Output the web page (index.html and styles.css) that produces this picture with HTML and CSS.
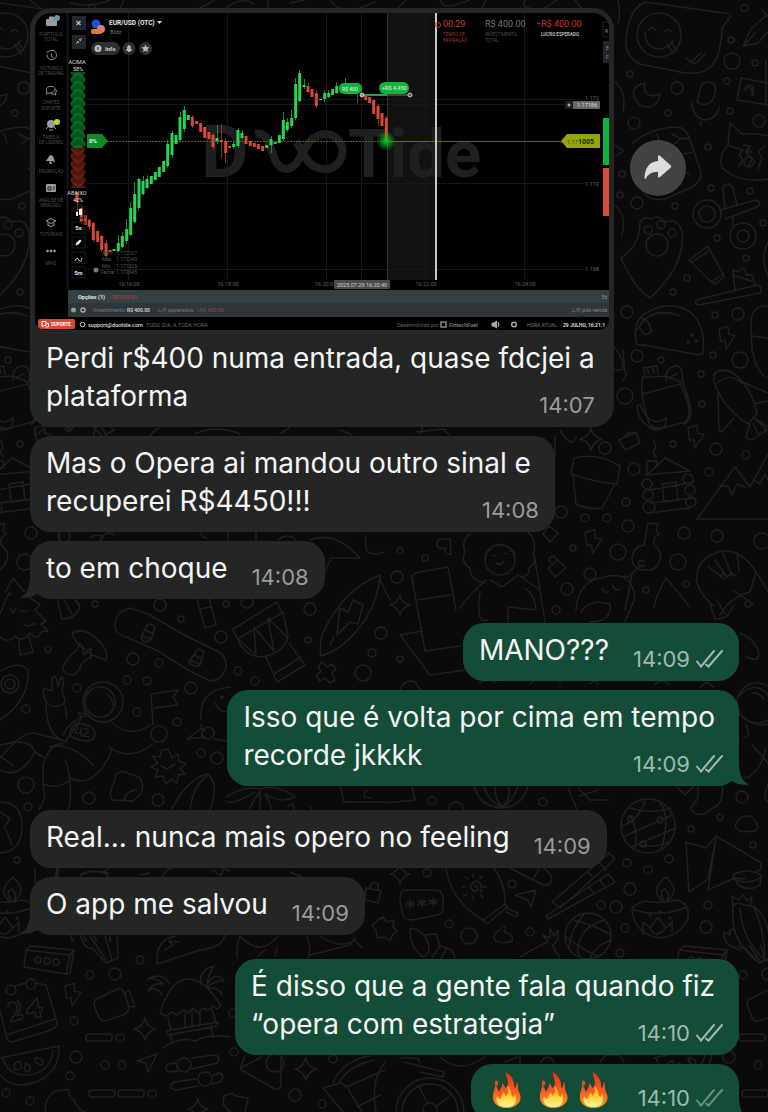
FILE: index.html
```html
<!DOCTYPE html>
<html lang="pt-BR">
<head>
<meta charset="utf-8">
<meta name="viewport" content="width=device-width, initial-scale=1">
<title>Conversa</title>
<link rel="stylesheet" href="styles.css">
</head>
<body>
<div class="screen">
<svg class="wallpaper" aria-hidden="true">
<defs>
<symbol id="bolt" viewBox="0 0 20 26" overflow="visible"><path d="M1 3L11 0L12 9L19 10L9 25L8 16L3 17Z"/></symbol>
<symbol id="spark" viewBox="0 0 20 20" overflow="visible"><path d="M10 0Q11 8 20 10Q12 12 10 20Q8 12 0 10Q8 8 10 0Z"/></symbol>
<clipPath id="left-edge"><path d="M0 0H115V592H0ZM0 868H115V942H0Z"/></clipPath>
<clipPath id="right-edge"><path d="M653 945H900V1400H653Z"/></clipPath>
</defs>
<g id="doodles">
<!-- small dots -->
<path d="M741 8a3.500 3.500 0 1 1 7 0a3.500 3.500 0 1 1-7 0M728 40a3 3 0 1 1 6 0a3 3 0 1 1-6 0M752 63a3 3 0 1 1 6 0a3 3 0 1 1-6 0M627 74a3 3 0 1 1 6 0a3 3 0 1 1-6 0M665 113a3 3 0 1 1 6 0a3 3 0 1 1-6 0M724 81a3 3 0 1 1 6 0a3 3 0 1 1-6 0M727 111a3 3 0 1 1 6 0a3 3 0 1 1-6 0M705 147a3 3 0 1 1 6 0a3 3 0 1 1-6 0M619 174a3 3 0 1 1 6 0a3 3 0 1 1-6 0M617 195a3 3 0 1 1 6 0a3 3 0 1 1-6 0M672 206a3 3 0 1 1 6 0a3 3 0 1 1-6 0M708 188a3 3 0 1 1 6 0a3 3 0 1 1-6 0M747 191a3 3 0 1 1 6 0a3 3 0 1 1-6 0M760 223a3 3 0 1 1 6 0a3 3 0 1 1-6 0M714 238a3 3 0 1 1 6 0a3 3 0 1 1-6 0M743 258a3 3 0 1 1 6 0a3 3 0 1 1-6 0M684 278a3 3 0 1 1 6 0a3 3 0 1 1-6 0M670 292a3 3 0 1 1 6 0a3 3 0 1 1-6 0M712 315a3 3 0 1 1 6 0a3 3 0 1 1-6 0"/>
<g>
<circle cx="732" cy="61" r="8"/><circle cx="677" cy="88" r="6"/><circle cx="634" cy="123" r="6"/><circle cx="759" cy="121" r="6"/><circle cx="637" cy="203" r="6"/><circle cx="627" cy="312" r="6"/><circle cx="738" cy="314" r="6"/>
<circle cx="637" cy="356" r="6"/><circle cx="661" cy="360" r="3"/><circle cx="713" cy="355" r="3"/><circle cx="740" cy="360" r="8"/><circle cx="701" cy="374" r="3"/><circle cx="625" cy="396" r="8"/><circle cx="702" cy="404" r="3"/><circle cx="605" cy="448" r="6"/><circle cx="673" cy="444" r="3"/><circle cx="716" cy="449" r="6"/><circle cx="746" cy="455" r="4"/><circle cx="634" cy="469" r="6"/><circle cx="709" cy="472" r="4"/><circle cx="626" cy="502" r="4"/><circle cx="561" cy="512" r="6"/><circle cx="585" cy="518" r="4"/><circle cx="607" cy="518" r="4"/><circle cx="628" cy="526" r="6"/><circle cx="684" cy="533" r="6"/><circle cx="717" cy="536" r="6"/><circle cx="618" cy="552" r="8"/><circle cx="573" cy="548" r="3"/><circle cx="678" cy="562" r="8"/><circle cx="590" cy="574" r="6"/><circle cx="567" cy="589" r="6"/><circle cx="646" cy="590" r="3"/><circle cx="686" cy="584" r="3"/><circle cx="400" cy="551" r="3"/><circle cx="425" cy="558" r="3"/><circle cx="397" cy="577" r="6"/><circle cx="762" cy="541" r="8"/>
<circle cx="95" cy="604" r="3"/><circle cx="160" cy="605" r="6"/><circle cx="181" cy="619" r="3"/><circle cx="226" cy="604" r="3"/><circle cx="247" cy="602" r="6"/><circle cx="310" cy="609" r="6"/><circle cx="221" cy="637" r="6"/><circle cx="308" cy="640" r="3"/><circle cx="48" cy="649" r="3"/><circle cx="133" cy="659" r="6"/><circle cx="159" cy="663" r="4"/><circle cx="238" cy="671" r="4"/><circle cx="255" cy="681" r="4"/><circle cx="127" cy="680" r="4"/><circle cx="147" cy="681" r="4"/><circle cx="191" cy="688" r="6"/><circle cx="77" cy="688" r="4"/><circle cx="363" cy="673" r="8"/><circle cx="372" cy="653" r="4"/><circle cx="381" cy="633" r="6"/><circle cx="137" cy="712" r="4"/><circle cx="177" cy="722" r="4"/><circle cx="26" cy="709" r="4"/><circle cx="201" cy="753" r="4"/><circle cx="217" cy="758" r="6"/><circle cx="26" cy="785" r="8"/><circle cx="28" cy="807" r="4"/><circle cx="89" cy="798" r="6"/><circle cx="158" cy="800" r="6"/><circle cx="400" cy="659" r="3"/><circle cx="556" cy="610" r="4"/><circle cx="748" cy="604" r="3"/>
<circle cx="432" cy="801" r="4"/><circle cx="456" cy="809" r="7"/><circle cx="543" cy="802" r="4"/><circle cx="742" cy="797" r="6"/><circle cx="720" cy="817" r="3"/><circle cx="691" cy="829" r="3"/><circle cx="753" cy="845" r="3"/><circle cx="627" cy="863" r="4"/><circle cx="648" cy="870" r="4"/><circle cx="669" cy="859" r="4"/><circle cx="630" cy="889" r="6"/><circle cx="601" cy="905" r="4"/><circle cx="616" cy="907" r="6"/><circle cx="625" cy="928" r="4"/><circle cx="708" cy="905" r="4"/><circle cx="706" cy="927" r="6"/><circle cx="512" cy="884" r="4"/><circle cx="427" cy="873" r="4"/><circle cx="449" cy="924" r="4"/><circle cx="469" cy="936" r="8"/><circle cx="530" cy="932" r="4"/><circle cx="620" cy="953" r="4"/><circle cx="17" cy="860" r="3"/>
<circle cx="140" cy="960" r="4"/><circle cx="115" cy="974" r="6"/><circle cx="90" cy="975" r="4"/><circle cx="74" cy="1021" r="4"/><circle cx="120" cy="1038" r="4"/><circle cx="76" cy="1057" r="6"/><circle cx="105" cy="1065" r="4"/><circle cx="122" cy="1065" r="4"/><circle cx="70" cy="1076" r="4"/><circle cx="6" cy="1093" r="4"/><circle cx="30" cy="1101" r="4"/><circle cx="152" cy="1094" r="4"/><circle cx="233" cy="1013" r="4"/><circle cx="234" cy="1052" r="4"/><circle cx="333" cy="1059" r="4"/><circle cx="295" cy="1095" r="6"/><circle cx="322" cy="1104" r="4"/>
</g>
<!-- laughing speech balloon, pen, moon, microphone -->
<path d="M645 2Q628 10 626 40Q625 57 640 64L680 72Q708 78 717 57Q722 43 722 28L731 16Q731 13 724 13Z"/>
<circle cx="659" cy="35" r="22"/><path d="M645 32Q645 48 659 49Q670 48 674 40M649 30q3-5 7 0M664 32q4-5 7 0M667 44l7 10M671 42l6 9M686 58l5 4l10-9M691 62l4 2l10-10"/>
<path d="M768 14L751 29L743 46L758 43L768 32M744 46L755 33M762 10L768 17"/>
<path d="M645 83Q631 86 634 97Q638 108 650 107Q659 104 660 94Q651 98 646 93Q643 88 645 83Z"/>
<path d="M701 86Q705 79 714 84Q717 87 714 97L711 102Q704 107 697 102ZM691 103Q694 119 706 120Q717 118 719 108M701 121V126"/>
<path d="M741 78L768 83M741 78L737 100L768 105M766 60V104"/><path d="M746 91a4 4 0 1 1 7 0v4M744 89q6-4 8 2v4"/>
<!-- ice block, cat, scissors, paw -->
<path d="M633 143Q650 128 676 127Q686 127 690 140L701 172Q702 182 690 188L665 199Q648 202 642 190M657 134L660 143M672 134L681 139L674 144M678 138L690 139M684 154L692 152M681 168L690 175"/>
<path d="M730 123L728 145Q718 155 722 168Q740 184 768 179M730 123L742 134Q756 133 768 136M730 146L743 150L739 155L743 160L739 166M744 145L750 146L746 152L752 159L748 168M765 146L758 151L762 158L758 169M748 153q0-5 4 0"/><circle cx="749" cy="162" r="5"/>
<circle cx="707" cy="214" r="14"/><circle cx="707" cy="214" r="8"/><circle cx="743" cy="236" r="13"/><circle cx="743" cy="236" r="6"/><path d="M720 210L756 200Q763 203 757 207L725 219M725 209L723 188Q727 180 733 188L737 205M733 217L733 226"/>
<path d="M640 222Q644 216 651 219Q658 214 665 222Q679 218 682 232Q686 265 650 298Q634 288 621 258Q640 246 640 222Z"/><circle cx="657" cy="245" r="11"/><circle cx="648" cy="230" r="4"/><circle cx="661" cy="225" r="4"/><circle cx="672" cy="233" r="4"/>
<path d="M689 260L708 246L723 274L711 282ZM692 262L710 250M711 282L716 284L724 277L723 273"/>
<path d="M696 300L757 285Q764 288 760 293L699 305Q694 304 696 300ZM735 290L733 270Q738 274 742 268Q747 269 746 275Q755 274 753 280L756 286M733 275L751 281"/>
<path d="M768 242Q760 258 768 276M768 306Q750 305 751 325L752 350Q758 376 768 378M751 336L768 338"/>
<!-- taco, bottle and fruit -->
<path d="M636 342Q632 318 650 311Q671 300 690 312Q706 325 703 352Q702 356 694 354L644 345Q636 346 636 342ZM637 330Q650 305 680 316M640 328Q645 340 652 330M641 318Q651 320 651 333"/><circle cx="692" cy="335" r="1"/><circle cx="688" cy="342" r="1"/><circle cx="696" cy="341" r="1"/>
<path d="M643 377Q639 392 648 420Q650 430 663 428L685 422Q691 418 688 403L680 382Q667 374 653 377ZM643 394L680 384M683 381L690 405Q693 420 684 424M645 375L643 368L657 366L658 374M647 368l2 6M652 367l2 6M666 380Q665 366 678 366Q684 369 682 382M670 379q3-5 7-5"/>
<path d="M637 406Q638 423 655 430Q667 430 666 418Q657 426 647 417L640 405Z"/>
<path d="M714 374Q725 365 738 377Q753 391 757 414L748 424Q723 408 714 382ZM717 383Q730 372 742 383M738 380L768 393M754 404L768 401M718 394L719 430Q722 434 725 428L734 418M750 424L746 437Q750 443 759 435L767 430L755 419M753 424L759 435M757 420L768 427"/>
<path d="M623 350l2 22q4 2-2 8"/>
<use href="#bolt" x="718" y="326" width="18" height="24"/><use href="#bolt" x="687" y="424" width="18" height="26"/><use href="#bolt" x="584" y="529" width="19" height="26"/>
<use href="#spark" x="580" y="428" width="22" height="22"/><use href="#spark" x="390" y="595" width="20" height="20"/><use href="#spark" x="134" y="1018" width="22" height="22"/><use href="#spark" x="295" y="1058" width="22" height="22"/><use href="#spark" x="390" y="864" width="20" height="20"/><use href="#spark" x="188" y="1098" width="20" height="22"/>
<path d="M619 440L636 432L640 443L625 450ZM625 436l4-4l5 2M654 440l2 8l-3 4l3 5"/>
<!-- flower pot, cabin, mountains, key -->
<path d="M574 458Q598 452 620 466L617 484Q594 482 571 474ZM573 475L576 504Q588 510 602 508L615 484"/>
<path d="M647 475L665 458L690 471M647 475V461L657 461L656 468M645 475L690 471M650 490L694 482M650 503L694 498M649 513L690 508M662 484L676 482L678 500L664 502Z"/><circle cx="647" cy="484" r="5"/><circle cx="648" cy="495" r="5"/><circle cx="649" cy="507" r="6"/><circle cx="688" cy="479" r="5"/><circle cx="690" cy="490" r="5"/><circle cx="691" cy="502" r="5"/>
<path d="M768 519L697 519L735 467L750 487L768 454M720 486L728 486L732 495L737 484L745 487M754 480l6 4l5-10l3 6"/>
<path d="M648 523L658 524L656 530L659 534L654 538L654 545Q664 552 659 562Q656 571 646 570Q632 570 632 558Q634 546 644 545ZM644 565a3 3 0 1 1 0-3M641 565L628 577L624 576"/>
<path d="M549 526L558 533L550 542L543 534ZM548 568L558 560L566 568L555 577ZM551 563q-5-5 3-7l4 5M450 539h-8q-6 0-5 7q4 4 8 2l1 6l5 0Z"/>
<!-- woman with laptop -->
<circle cx="500" cy="560" r="15"/><path d="M486 553Q500 536 515 553M470 534Q461 540 465 552Q460 562 470 568Q470 580 484 583M528 532Q538 542 533 554Q538 562 529 568Q530 576 521 577M490 580L502 587L518 575L540 590M486 580Q470 594 460 608M492 555l3 1M504 553l3 1M496 563q5 3 8-2M412 580Q410 574 420 572L448 567L456 610M412 578L425 651L460 646M418 600L450 595M400 635L422 631M400 635L430 675L480 668M480 592Q475 625 488 620M535 560L545 622M525 588Q535 595 536 610L508 607V622"/>
<!-- bird, shrimp, tree -->
<path d="M576 610Q578 580 605 577Q632 570 635 598L625 622M581 612Q590 598 610 604Q612 622 590 622M602 588l2 4l5 0M612 585l4 5l4-1M625 610L632 575"/>
<path d="M697 583Q694 558 722 551Q743 550 756 572L768 591M697 583Q702 597 714 606M708 566L724 579M715 560L727 577M723 553L732 576M737 553L739 571M720 577l3-4l4 4l4-4l5 3M756 572L750 592Q730 597 720 615M733 590l20 14"/>
<path d="M666 578Q655 598 654 607M666 578L690 607M11 594Q10 588 0 614M30 598L40 604L35 610L46 621L41 624L48 631L41 632Q37 642 30 633Q22 643 15 636Q8 644 0 637M20 610q5 4 7 0M24 624q4 4 8 0l4 0M19 640L20 655L33 652L29 637M10 608l3 5l3-5"/>
<path d="M57 598L62 619Q77 619 80 605L70 594M64 600l8 14M74 598L79 606M710 604L715 619Q728 620 733 606M717 600l8 14"/>
<!-- mushroom, skateboard, drum, surfboard -->
<path d="M72 633Q86 626 100 642Q109 652 106 660L92 655L76 642ZM80 643L77 650Q68 657 63 666Q62 674 73 675Q80 672 82 663L92 656M82 645L84 655L91 648V658M740 633Q757 640 759 655Q757 663 745 656"/>
<path d="M115 627Q114 612 130 608L150 615L186 636L215 650Q227 655 226 668Q222 680 210 681L190 671L156 650L126 637Q115 634 115 627Z"/><path d="M146 627Q149 621 155 627L151 640Q144 645 141 637ZM145 630l9 4M142 636l9 3M195 653Q198 646 204 652L200 665Q193 668 189 662ZM194 655l8 4M191 661l9 3M197 599L205 628L216 625L209 598M200 609L211 607"/>
<path d="M233 629L277 602L282 613L237 639ZM238 640Q247 660 267 656Q286 650 288 636L283 612M237 638L256 655L254 627L274 651L268 618L287 637M266 657L277 682L305 665L289 643M274 674L301 657"/>
<path d="M380 575Q342 590 322 635Q319 650 321 656Q345 649 365 620Q379 598 380 575ZM340 608L337 635L350 622L358 624L363 605L353 600L348 612ZM334 637L330 645M380 580L390 600"/>
<path d="M318 667L322 662L327 667L332 664L336 669L332 673L335 680L330 683L325 678L320 681L316 676L321 672Z"/>
<!-- rocket and astronaut -->
<path d="M0 671Q20 660 28 670Q30 700 0 720"/><circle cx="10" cy="684" r="9"/><circle cx="10" cy="684" r="5"/>
<circle cx="103" cy="702" r="20"/><circle cx="100" cy="702" r="15"/><path d="M106 693Q112 697 113 705M46 702Q42 692 44 688L52 691L52 679Q54 673 57 680L58 687L61 677Q65 677 63 685L62 692Q67 702 63 704Q54 710 46 702ZM46 704Q46 735 65 742L82 717Q76 711 80 713L87 714M65 706L67 718M63 735Q70 720 87 715M112 723Q132 739 150 725M109 747Q130 762 153 744M62 740L38 734Q25 728 0 758M63 744Q50 742 43 765L43 784Q58 790 70 780M50 747Q70 742 93 765M112 750Q95 790 70 778M18 742Q32 742 35 752L43 757M0 745L15 742M0 770Q20 780 35 752M0 756L14 766M43 784L45 797L39 810M65 760Q72 775 70 805L66 812"/><circle cx="159" cy="734" r="8"/><path d="M153 725L151 694L178 690L173 697L178 705L154 708M75 724Q90 722 95 732Q96 740 88 741Q74 740 70 735Q70 728 75 724Z"/><path d="M78 727l-3 6h6M81 728v8M84 729q5-1 4 3q-4 3-5 4l6 1"/>
<path d="M168 749L172 758L178 754L179 761L186 764L180 768L185 774L178 775L177 783L171 779L166 784L163 776L155 777L158 770L151 767L158 763L152 756L160 757L162 750ZM161 766l6 3l8-5"/>
<path d="M115 780Q115 770 125 772L139 777Q145 784 141 794L133 801L113 800Q107 795 115 780ZM124 801Q126 790 137 790"/>
<path d="M171 810Q188 778 207 774Q220 782 210 810M190 810Q193 785 207 776M226 797Q245 785 260 789Q278 784 295 797Q280 804 265 794Q275 810 268 815M255 792Q232 806 226 801M260 792Q246 808 250 818M260 790V815M288 806l5-2l2 14M310 806l10 18"/>
<path d="M201 720Q198 690 230 687M187 739L202 728M187 739L205 737M214 739L240 743M201 725Q202 731 205 731"/><circle cx="208" cy="733" r="6"/><circle cx="222" cy="697" r="1"/><path d="M215 703q3 8 12 9"/>
<path d="M340 786L344 802H384M367 790q-8 8 4 8M0 802Q22 802 22 826Q22 852 0 853M0 812l10 6l-6 10M12 845L6 830"/>
<!-- planets, globe, stocking -->
<circle cx="757" cy="703" r="20"/><path d="M740 695Q755 680 768 695M743 717Q755 727 768 724M752 693q8 0 12 6M746 726q6 10-2 12M752 745L768 763M766 748Q760 775 744 778"/>
<circle cx="648" cy="826" r="27"/><path d="M630 808Q650 815 671 808M622 826Q640 820 645 800M625 836L672 815M631 847L676 828M634 850Q640 835 630 815M658 800Q672 815 661 850M640 845Q655 848 670 842"/><circle cx="631" cy="819" r="3"/><circle cx="660" cy="820" r="3"/><circle cx="643" cy="844" r="3"/>
<path d="M698 783V798L691 808Q694 816 704 814L718 805Q724 797 722 785M675 785L685 795L695 785M735 826Q738 815 750 816Q756 820 758 827Q758 832 750 831Q739 834 735 826ZM768 784Q762 800 768 802M474 786Q478 805 500 808Q522 808 528 786M483 786Q490 803 502 807Q494 797 495 786M508 786Q512 798 502 807M518 786Q512 804 502 807M568 788L578 812L572 814L583 830M578 788L590 800L608 800M580 796L598 790M385 803L415 800L412 787"/>
<!-- newspaper, chopsticks, basketball -->
<path d="M686 842L706 848L716 836L760 862Q764 869 756 872M686 842L689 892L708 879L716 838M708 890L735 878L745 879M716 838L708 890"/><path d="M733 875q14-8 28 0l-1 10q-10 7-22 0ZM733 878q12 8 27 0"/>
<path d="M552 902L609 853L615 859L560 908ZM546 916L608 874L615 882L548 919ZM599 862L606 870M588 872l5 5M600 880l4 6M589 887l4 5"/>
<circle cx="588" cy="936" r="23"/><path d="M565 936Q590 955 600 956M573 920Q595 925 611 935M585 913Q570 930 569 948M605 920Q585 925 580 940Q575 950 580 957M611 940Q596 945 590 958"/>
<!-- oil lamp -->
<path d="M632 910Q632 905 645 901Q662 904 675 900Q690 902 688 918Q680 936 660 938Q635 935 632 910ZM634 910Q660 918 687 907M666 877Q653 888 658 896L663 902H666Q678 893 672 884ZM664 900Q658 892 665 889Q671 895 667 900M643 934L643 922L650 928L658 917L666 928L672 922V932M650 928Q655 940 666 928"/><circle cx="650" cy="915" r="1"/><circle cx="660" cy="912" r="1"/><circle cx="670" cy="918" r="1"/>
<!-- cactus -->
<path d="M733 912Q730 900 745 905Q765 905 770 940M733 912Q730 940 758 962L768 960M740 908Q742 940 765 960M754 906Q764 930 765 958M733 905L732 896L738 900L743 895L747 901L752 897L750 906M740 950Q722 944 724 932L730 935Q728 928 735 930"/>
<!-- lotion, password card, shell, arrow -->
<path d="M446 868Q450 900 483 920L505 904Q506 885 494 868M483 920L487 924L507 907L505 903M507 908L518 913L516 917L506 912M474 886Q478 885 478 890Q474 893 471 888Q471 882 477 881Q483 884 481 892M465 877l3 2M473 874v3M482 876l-2 3M462 887h3M464 896l3-2M473 900v-3M483 898l-2-3M486 887h-3M510 868l33 17Q554 886 551 875L538 862M533 880l7-14"/>
<path d="M404 890L435 890Q443 890 443 899L443 908Q443 914 437 915L412 920Q403 920 402 912L400 899Q401 890 404 890Z"/><path d="M410 900v8M406 902l8 4M414 902l-8 4M422 899v8M418 901l8 4M426 901l-8 4M433 898v8M429 900l8 4M437 900l-8 4"/>
<path d="M515 895L536 890L531 907L528 900ZM410 929Q416 927 424 935L436 934L440 946L452 950L455 958M410 929Q410 950 424 957M424 935Q434 950 424 957M440 946L432 958M447 948L441 958M494 939Q493 933 500 930L502 926Q508 925 504 932Q514 934 512 941Q500 945 494 939ZM520 957Q540 945 548 942L543 935L550 938V928L554 936L558 930V938Q554 946 552 945L560 958"/>
<path d="M378 920L383 917L386 922L394 920L393 927L397 931L392 935L390 941L384 937L377 938L376 930L372 926ZM366 888L381 891L378 903L365 900ZM370 888q2-8 8-4v5"/>
<!-- cassette, calendar, bolt, video camera -->
<path d="M26 950L31 946L74 950L70 973L66 974L24 967ZM26 950L70 955L66 974M70 955L74 950"/><circle cx="38" cy="960" r="3"/><circle cx="47" cy="961" r="3"/><circle cx="56" cy="962" r="3"/>
<path d="M5 992L8 990M15 986L26 983M35 983L46 985L57 1022Q58 1028 48 1031L12 1042Q7 1042 6 1035L0 1010M6 1035L55 1019"/><circle cx="11" cy="990" r="5"/><circle cx="31" cy="984" r="5"/><path d="M8 1007Q8 1000 15 1003Q21 1008 12 1018L10 1022L22 1019L23 1015L17 1015Q24 1007 17 1000M27 1010L37 998L39 1008L43 1007L42 1011L40 1012L41 1017L36 1017L35 1012L27 1014Z"/>
<use href="#bolt" x="64" y="982" width="18" height="26"/>
<path d="M95 1000L117 989Q123 988 125 994L129 1008Q128 1013 123 1015L105 1021Q100 1021 98 1015L94 1005ZM124 994L129 990L135 1007L128 1006"/>
<rect x="86" y="1034" width="26" height="7" rx="3"/><rect x="89" y="1090" width="26" height="7" rx="3"/><rect x="118" y="1090" width="26" height="7" rx="3"/>
<!-- beach hut, watermelon, sliders -->
<path d="M160 1013Q170 980 188 979Q204 978 221 1006L217 1009L213 1006L208 1010L203 1008L198 1013L193 1008L188 1013L183 1010L177 1015L172 1012L166 1016ZM166 1031L218 1022V1026L168 1035ZM168 1018L171 1030M185 1014V1027M192 1012V1026M200 1012V1024M212 1009L216 1023M170 1034L173 1043M211 1025L213 1037M163 1048Q180 1036 195 1041Q208 1034 230 1037M201 984Q198 970 214 966Q208 975 207 985Q215 970 224 981Q213 980 207 988Q220 987 222 995M162 995Q155 985 148 991Q153 982 163 984Q155 977 148 979Q162 971 170 984"/>
<path d="M0 1058L59 1046Q60 1070 40 1080Q15 1092 0 1075M3 1058Q8 1075 25 1075Q50 1075 53 1050M15 1070Q12 1062 20 1061Q24 1070 15 1070ZM26 1063Q34 1068 28 1072Q22 1070 26 1063ZM35 1058Q45 1058 42 1065Q34 1064 35 1058Z"/>
<path d="M137 1061L157 1054L148 1072L146 1063ZM169 1064L176 1063M192 1058L214 1055Q222 1056 217 1063L192 1069M178 1071L170 1072Q163 1070 168 1064M174 1082L196 1079M212 1076L220 1073Q226 1076 220 1082L212 1084M198 1086L176 1090Q167 1088 174 1082"/><circle cx="184" cy="1065" r="7"/><circle cx="205" cy="1079" r="7"/>
<path d="M45 1112Q45 1088 69 1090Q68 1098 74 1100Q77 1108 84 1112M224 1096L232 1093L235 1096L248 1098L245 1112M224 1096L223 1104L230 1112M245 1056Q240 1068 241 1070L275 1089Q282 1090 281 1083V1058M262 1057L241 1068"/><circle cx="275" cy="1063" r="9"/>
<path d="M323 1088L342 1083L346 1087L385 1070M323 1088L343 1112M333 1083Q343 1060 370 1056M338 1084Q348 1066 374 1060M348 1089L362 1112M385 1062Q370 1080 376 1112M357 1107L380 1095"/>
<!-- bicycle wheel and shapes between bubbles -->
<circle cx="430" cy="1112" r="34"/><circle cx="430" cy="1112" r="28"/><circle cx="430" cy="1110" r="7"/><path d="M418 1085L428 1104M452 1094L436 1107M404 1062L444 1072L443 1077L420 1072M400 1058l18 0l2 5M440 1057Q460 1075 485 1057M505 1062l15-6v8M540 1063q8-12 14 0M600 1062l6-7l14 0l4 7M690 1056v8"/>
<path d="M80 935Q85 950 92 948L106 963L118 958L117 936M90 936L106 960M105 936L112 960M157 964Q155 940 175 936M157 964L200 950Q222 948 225 935M165 950l8-5l-4-4l10 1M237 958Q236 945 240 936M240 936Q260 958 278 936M307 936Q312 950 308 958M320 936Q340 950 355 940L362 948M310 955L350 945L355 938M258 956l7-6M275 956l2-8"/>
<path d="M58 868V877M82 875Q90 869 108 873M140 875l10-2M162 877q5-10 10-8M213 870l8 6l2-7l7 2M290 872l12 5"/>
<path d="M35 427l0 9l10-8M68 427q2 6 5 0M94 428l8 8M150 436q6-8 10-8M195 434Q215 424 240 434M280 434l10-7M340 430l12 5M420 434l3-8M416 432l28-3l5 6M560 430Q572 450 576 437M555 436v20M60 533v8M90 538q8-6 14 0M200 533l6 6M228 532v9M256 532v9M278 540q10-8 18 0M310 540Q335 530 360 558L330 558M366 536Q362 560 384 552M330 560l-5 12"/>
<path d="M30 0l10 8M70 3q20 5 40-3M120 9L124 0M200 8L215 0M226 8q15-12 28-4M268 0l0 8M290 3l14-3M330 0q4 6 10 8M360 8l15-6M398 8l8-8M440 0q4 10 18 4l12-4M482 8l4-8M525 0q-4 8 5 8M545 8l12-8M575 0l6 8M618 0q3 15 0 23M615 82q12 10 8 30M615 145l8 6l-8 6M615 205q12 10 7 30M612 345q14 15 10 25l-8 0"/>
<path d="M400 690q5-12 15-8l5 8M480 683q8-6 16 0M590 684q5-6 8 0M530 684l6-5M560 684l0-4M655 685q8-8 14 0M700 688l6-6l8 5"/>
</g>
<g clip-path="url(#left-edge)"><use href="#doodles" x="-653"/></g>
<g clip-path="url(#right-edge)"><use href="#doodles" x="653"/></g>
</svg>

<main class="chat">
<div class="row row-first">
<article class="bubble in media">
<svg class="chart" viewBox="35 13 574 317" role="img" aria-label="Gráfico EUR/USD (OTC)">
<defs><radialGradient id="glow"><stop offset="0" stop-color="#12c52c"/><stop offset="1" stop-color="#12c52c" stop-opacity="0"/></radialGradient>
<pattern id="up" width="16" height="8" patternUnits="userSpaceOnUse" x="70" y="72"><path d="M0 0H16L13 4L16 8H0L3 4Z" fill="#07551a"/><path d="M0 8L8 3L16 8L13 4L8 0L3 4Z" fill="#0a6b22"/></pattern>
<pattern id="down" width="16" height="8" patternUnits="userSpaceOnUse" x="70" y="148"><path d="M0 0H16L13 4L16 8H0L3 4Z" fill="#50150f"/><path d="M0 0L8 5L16 0L13 4L8 8L3 4Z" fill="#6d2019"/></pattern>
</defs>
<rect x="35" y="13" width="574" height="317" fill="#000"/>
<rect x="387" y="13" width="49" height="267" fill="#111"/>
<g fill="#1f1f1f" font-family="Roboto, sans-serif" font-weight="700"><text x="201" y="177" font-size="73">D</text><text x="348" y="177" font-size="67">Tide</text></g>
<path d="M255 134C275 129 268 168 286 169C303 169 302 135 325 134A17.500 17.500 0 1 1 325 169C306 169 303 150 296 142" fill="none" stroke="#1f1f1f" stroke-width="8"/>
<path d="M128.500 13V280M227.500 13V280M326.500 13V280M361.500 13V280M425.500 13V280M524.500 13V280M86 99.500H585M86 104.500H565M86 183.500H585M86 269.500H585" stroke="#171717" fill="none"/>
<path d="M387.500 13V280" stroke="#333"/><path d="M67.500 13V290" stroke="#151718" stroke-width="2"/>
<path d="M107 141.500H387" stroke="#655f16" stroke-dasharray="2 1"/><path d="M387 141.500H565" stroke="#626b10"/>
<rect x="70" y="72" width="16" height="76" fill="url(#up)"/><rect x="70" y="148" width="16" height="40" fill="url(#down)"/>
<!-- candles: thin wicks, then bodies -->
<g fill="none" stroke="#178c35"><path d="M118.500 235V252M122.500 232V248M126.500 219V244M130.500 202V236M134.500 182V223M138.500 178V210M143.500 176V195M147.500 175V189M167.500 140V168M172.500 131V158M180.500 112V142M184.500 106V132M217.500 125V144M233.500 142V149M238.500 128V148M242.500 130V140M271.500 136V153M283.500 112V141M287.500 118V132M291.500 110V128M295.500 78V120M299.500 70V102M304.500 79V89M324.500 90V102M328.500 90V98M336.500 82V94M345.500 78V92"/></g>
<g fill="none" stroke="#8f3023"><path d="M77.500 197V213M81.500 205V224M89.500 219V230M93.500 222V242M101.500 235V252M106.500 240V257M192.500 115V128M213.500 133V150M221.500 124V158M225.500 138V163M308.500 83V93M316.500 90V108M357.500 87V103M378.500 104V126M386.500 116V141"/></g>
<path fill="none" stroke="#29d354" stroke-width="3" d="M114 249V251M118.300 243V251M122.300 236V247M126.700 229V241M130.700 208V235M134.700 194V222M139 179V208M143 181V194M147 179V188M151.300 176V184M155.300 172V180M159.300 167V177M163.700 161V172M167.700 144V166M172 133V155M176 135V144M180 117V140M184.300 110V129M188.300 115V120M217 138V141M233.700 144V147M238 130V146M242 133V138M266.700 145V148M271 139V145M275 142V144M279.300 135V143M283.300 120V139M287.300 122V130M291.700 118V126M295.700 84V118M299.700 73V101M304 85V87M320.500 99V100M324.700 93V99M328.700 93V97M332.700 89V95M336.700 86V93"/>
<path fill="none" stroke="#d64a37" stroke-width="3" d="M77 192V202M81.300 208V222M85.300 215V225M89.300 220V227M93.300 223V240M97.700 231V242M101.700 236V250M106 243V256M110 250V252M192.300 117V126M196.700 121V124M200.700 123V132M204.700 127V138M209 132V139M213 135V147M221.300 140V142M225.700 141V153M229.700 146V148M246 136V144M250.300 141V146M254.300 143V147M258.300 144V149M262.700 146V151M308 86V92M312 89V97M316.300 93V106M365.700 95V100M369.700 97V103M373.700 100V114M378 106V119M382 113V126M386.300 118V140"/>
<circle cx="386" cy="141" r="10" fill="url(#glow)"/>
<path d="M362 95H387" stroke="#18a83d" stroke-width="2"/><path d="M387 95H410" stroke="#777" stroke-width="1"/><circle cx="362" cy="95" r="2" fill="#8aa38f" stroke="#ccc"/><circle cx="410" cy="95" r="2" fill="#555" stroke="#ccc"/>
<rect x="339" y="83" width="23" height="11" rx="5" fill="#12b33c"/><rect x="379" y="82" width="30" height="12" rx="6" fill="#12b33c"/>
<path d="M436 13V280" stroke="#c9c9c9" stroke-width="2"/>
<g font-family="Roboto, sans-serif" font-size="6">
<g fill="#c9eccf" font-weight="500"><text x="342" y="91" font-size="5">R$ 400</text><text x="382" y="90" font-size="5.500">+R$ 4,450</text></g>
<!-- instrument header -->
<rect x="72" y="16" width="14" height="14" fill="#20262a"/><rect x="72" y="35" width="14" height="14" fill="#20262a"/>
<path d="M76.500 21l4 4M80.500 21l-4 4" stroke="#b3b7b9" stroke-width="1.500" fill="none"/><path d="M76 44l2.500-2.500M82 38l-2.500 2.500M77 41l2 2M79 39l2 2" stroke="#9da3a5" fill="none"/>
<circle cx="96" cy="24" r="4.500" fill="#1f4fd0"/><circle cx="101" cy="29" r="4" fill="#c98088"/><rect x="91" y="29" width="11" height="5" rx="2" fill="#e8792b"/>
<text x="109" y="25" fill="#e8e8e8" font-weight="700" font-size="6.500">EUR/USD (OTC)</text><path d="M157 21h5l-2.500 3z" fill="#ddd"/>
<text x="110" y="34" fill="#777">Blitz</text>
<rect x="91" y="42" width="29" height="13" rx="6.500" fill="#2a2f32"/><circle cx="129" cy="48.500" r="6.500" fill="#2a2f32"/><circle cx="145.500" cy="48.500" r="6.500" fill="#2a2f32"/>
<circle cx="98" cy="48.500" r="3.500" fill="#b9bcbd"/><path d="M98 47v3" stroke="#2a2f32"/><text x="105" y="51" fill="#d0d0d0" font-weight="700">Info</text>
<path d="M126.500 50.500l1-2q0-3 1.500-3t1.500 3l1 2zM128 51.500h2" fill="#b5b8b9" stroke="#b5b8b9"/><path d="M145.500 44.500l1.200 2.600 2.800.3-2.100 1.900.6 2.800-2.500-1.400-2.500 1.400.6-2.800-2.100-1.900 2.800-.3z" fill="#b5b8b9"/>
<g fill="#ddd" text-anchor="middle" font-size="5.500"><text x="77" y="64">ACIMA</text><text x="78" y="71">58%</text><text x="77" y="195">ABAIXO</text><text x="78" y="202">42%</text></g>
<path d="M87 134h15l6 7-6 7H87z" fill="#0d8a27"/><text x="89" y="143" fill="#e6f5e8" font-weight="700">0%</text>
<!-- left rail -->
<g fill="#9a9c9d"><rect x="46" y="19" width="11" height="7" rx="1"/><rect x="49" y="16.500" width="5" height="4" rx="1"/><circle cx="57" cy="18" r="3" fill="#6f8d9a"/>
<g fill="none" stroke="#8b8e90"><path d="M47 54.500a4.800 4.800 0 1 0 1-2.500l-1.500 0M51.500 53.500v3l2 1"/><path d="M50 93q-3 .5-4 1l1-2q-2-4 2-5.500q5-1 6 2q0 4-5 4.500M55.500 89q2 2 0 4l.5 2-2-1h-3"/></g>
<circle cx="51" cy="124" r="4"/><path d="M46 129l2-2M49 130h4M56 129l-2-2" stroke="#999"/><circle cx="57" cy="122" r="3" fill="#bfd426"/>
<path d="M46 161l4-6 3 1 2 6-4-1zM49 162l1 2h2l-1-3"/><rect x="46" y="184" width="10" height="8" rx="1"/><path d="M48 187h3v3h-3zM53 187h2M53 189h2" stroke="#222"/>
<path d="M46 221l5-2.500 5 2.500-5 2.500zM48 223v2.500q3 2 6 0V223" fill="none" stroke="#9a9c9d"/><circle cx="47.500" cy="251" r="1.300"/><circle cx="51" cy="251" r="1.300"/><circle cx="54.500" cy="251" r="1.300"/></g>
<g fill="#4c4f50" text-anchor="middle" font-size="4.500"><text x="51" y="36">PORTFÓLIO</text><text x="51" y="41">TOTAL</text><text x="51" y="70">HISTÓRICO</text><text x="51" y="75">DE TRADING</text><text x="51" y="104">CHATES</text><text x="51" y="110">SUPORTE</text><text x="51" y="139">TABELA</text><text x="51" y="144">DE LÍDERES</text><text x="51" y="173">PROMOÇÃO</text><text x="51" y="202">ANÁLISE DE</text><text x="51" y="207">MERCADO</text><text x="51" y="236">TUTORIAIS</text><text x="51" y="265">MAIS</text></g>
<!-- chart tools -->
<g fill="none" stroke="#191b1c"><rect x="72" y="207" width="13" height="11"/><rect x="72" y="222" width="13" height="11"/><rect x="72" y="237" width="13" height="11"/><rect x="72" y="252" width="13" height="11"/><rect x="72" y="267" width="13" height="11"/></g>
<path d="M76 212h2v4h-2zM79 209h3v6h-3zM75.500 245.500l1-3 3.500-3 1.500 1.500-3 3.500z" fill="#eee"/><path d="M75 261q2-5 4-1t3-2" fill="none" stroke="#ccc"/>
<g fill="#e0e0e0" font-weight="700" text-anchor="middle"><text x="78.500" y="230">5s</text><text x="78.500" y="275">5m</text></g>
<g fill="#555" font-size="5"><text x="102" y="255">Abrir</text><text x="102" y="261">Máx</text><text x="102" y="268">Mín</text><text x="101" y="274" font-size="4.500">Fechar</text><text x="116" y="255">1.172167</text><text x="116" y="261">1.172240</text><text x="116" y="268">1.171525</text><text x="116" y="274">1.172045</text></g><circle cx="96" cy="270" r="2.500" fill="#777"/>
<g fill="#606060" text-anchor="middle" font-size="5.500"><text x="129" y="286">16:16:00</text><text x="228" y="286">16:18:00</text><text x="333" y="286" text-anchor="end">16:20:0</text><text x="426" y="286">16:22:00</text><text x="525" y="286">16:24:00</text></g>
<rect x="334" y="280" width="56" height="9" rx="1" fill="#4b4b4b"/><text x="362" y="287" text-anchor="middle" fill="#ccc" font-size="5.500">2025.07.29 16:20:40</text>
<!-- position figures -->
<g font-size="9"><circle cx="438" cy="25" r="2.500" fill="none" stroke="#b8362c"/><text x="443" y="27" fill="#c53d32">00:29</text><text x="485" y="27" fill="#777">R$ 400.00</text><text x="536" y="27" fill="#d0342c">−R$ 400.00</text></g>
<g font-size="4.500"><g fill="#a3322b"><text x="443" y="36">TEMPO DE</text><text x="443" y="42">EXPIRAÇÃO</text></g><g fill="#4d4d4d"><text x="485" y="36">INVESTIMENTO</text><text x="485" y="42">TOTAL</text></g><text x="541" y="36" fill="#bbb" font-weight="700">LUCRO ESPERADO</text></g>
<g fill="#666" font-size="5.500"><text x="585" y="100">1.172</text><text x="585" y="186">1.170</text><text x="585" y="271">1.168</text></g>
<rect x="565" y="101" width="8" height="8" fill="#1b1f21"/><circle cx="569" cy="105" r="1.500" fill="#aaa"/><rect x="573" y="101" width="27" height="8" rx="1" fill="#686868"/><text x="577" y="107" fill="#ddd" font-size="5.500">1.17186</text>
<path d="M561 141l6-7h33v14h-33z" fill="#94a50a"/><text x="567" y="143.500" fill="#394006" font-size="5.500">1.17</text><text x="578" y="143.500" fill="#20250a" font-weight="700" font-size="7">1005</text>
<rect x="603" y="22" width="7" height="15" fill="#000" stroke="#202427"/><rect x="603" y="41" width="7" height="22" fill="#20262a"/><g fill="#888" font-size="5"><text x="605" y="33">R</text><text x="606" y="50">E</text><text x="606" y="59">F</text></g>
<rect x="603" y="118" width="6" height="47" fill="#0cb33d"/><rect x="603" y="168" width="6" height="48" fill="#d54c3b"/>
<!-- options strip and footer -->
<path d="M68 290h541v27H68z" fill="#2d3639"/><path d="M68 290h541v13H68z" fill="#344044"/>
<text x="78" y="299" fill="#e8e8e8" font-weight="700" font-size="5.500">Opções (1)</text><text x="109" y="299" fill="#a9463e" font-size="5.500">−R$ 400.00</text>
<circle cx="73.500" cy="310" r="2.500" fill="#90989a"/><circle cx="83" cy="310" r="2" fill="none" stroke="#a4abad" stroke-width="1.500"/>
<g font-size="5"><text x="93" y="312" fill="#6c7679" font-size="5.500">Investimento:</text><text x="127" y="312" fill="#ddd" font-weight="500">R$ 400.00</text><text x="158" y="312" fill="#6c7679" font-size="5.500">L/P esperados</text><text x="196" y="312" fill="#9c4039" font-size="5.500">−R$ 400.00</text>
<text x="602" y="299" fill="#8b9496">Ex</text><text x="572" y="312" fill="#7b8587" font-size="5.500">L/P pós-venda</text></g>
<rect x="38" y="319" width="37" height="10" rx="2" fill="#d94735"/><path d="M42 321.500h4v4h-2l-1.500 1.500V325.500H42zM47 323.500h1.500v3.500h-3" fill="none" stroke="#fff"/><text x="51" y="326" fill="#fff" font-weight="700" font-size="4.500">SUPORTE</text>
<g font-size="5.500"><circle cx="82.500" cy="324.500" r="2.300" fill="none" stroke="#ccc"/><text x="88" y="326.500" fill="#ddd" font-weight="500">support@duotide.com</text><text x="146" y="326.500" fill="#686868">TODO DIA, A TODA HORA</text>
<text x="397" y="326.500" fill="#666">Desenvolvido por</text><rect x="441" y="322" width="5" height="5" fill="none" stroke="#888" stroke-width="1.500"/><text x="449" y="326.500" fill="#888" font-weight="500">FintechFuel</text>
<path d="M492 323h2l2.500-2v7l-2.500-2h-2zM498 322q2 2.500 0 5" fill="#aaa" stroke="#aaa"/><circle cx="514" cy="324.500" r="2.300" fill="none" stroke="#aaa" stroke-width="1.500"/>
<text x="527" y="326.500" fill="#777" font-size="5">HORA ATUAL:</text><text x="563" y="326.500" fill="#ddd" font-weight="700" font-size="5">29 JULHO, 16:21:1</text></g>
</g>
</svg>
<div class="body wrap"><p class="text">Perdi r$400 numa entrada, quase fdcjei a<br>plataforma</p><div class="meta"><time>14:07</time></div></div>
</article>
<button class="share" type="button" aria-label="Encaminhar"><svg viewBox="0 0 28 26" width="28" height="26"><path d="M14 1.500q0-2 2-.8l10.500 9.500q1.500 1.300 0 2.600L16 22q-2 1.200-2-.8v-4.500Q5 16.500 2 23.500q-1.500 1-1.500-1Q1.500 7 14 6z" fill="#dcdcdd"/></svg></button>
</div>

<article class="bubble in"><div class="body wrap"><p class="text">Mas o Opera ai mandou outro sinal e<br>recuperei R$4450!!!</p><div class="meta"><time>14:08</time></div></div></article>
<article class="bubble in"><div class="body"><p class="text">to em choque</p><div class="meta"><time>14:08</time></div></div><svg class="tail" viewBox="0 0 24 28" aria-hidden="true"><path d="M10 0Q11 22 0 26.500Q11 28 19 22L24 0Z"/></svg></article>

<article class="bubble out group"><div class="body"><p class="text">MANO???</p><div class="meta"><time>14:09</time><svg class="ticks" viewBox="0 0 27 18" role="img" aria-label="Entregue"><path d="M1 11.500L5 16.500L18 1M10 14.500L12.500 16.500L26 1"/></svg></div></div></article>
<article class="bubble out"><div class="body wrap"><p class="text">Isso que é volta por cima em tempo<br>recorde jkkkk</p><div class="meta"><time>14:09</time><svg class="ticks" viewBox="0 0 27 18" role="img" aria-label="Entregue"><path d="M1 11.500L5 16.500L18 1M10 14.500L12.500 16.500L26 1"/></svg></div></div><svg class="tail" viewBox="0 0 24 28" aria-hidden="true"><path d="M14 0Q13 22 24 26.500Q13 28 5 22L0 0Z"/></svg></article>

<article class="bubble in group"><div class="body"><p class="text">Real... nunca mais opero no feeling</p><div class="meta"><time>14:09</time></div></div></article>
<article class="bubble in"><div class="body"><p class="text">O app me salvou</p><div class="meta"><time>14:09</time></div></div><svg class="tail" viewBox="0 0 24 28" aria-hidden="true"><path d="M10 0Q11 22 0 26.500Q11 28 19 22L24 0Z"/></svg></article>

<article class="bubble out group"><div class="body wrap"><p class="text">É disso que a gente fala quando fiz<br>“opera com estrategia”</p><div class="meta"><time>14:10</time><svg class="ticks" viewBox="0 0 27 18" role="img" aria-label="Entregue"><path d="M1 11.500L5 16.500L18 1M10 14.500L12.500 16.500L26 1"/></svg></div></div></article>
<article class="bubble out"><div class="body"><div class="flames" role="img" aria-label="Fogo, fogo, fogo">
<svg class="flame spaced" viewBox="0 0 28 36"><defs><linearGradient id="fire" x2="0" y2="1"><stop offset="0" stop-color="#e92e16"/><stop offset=".55" stop-color="#fb5b20"/><stop offset="1" stop-color="#ff9c27"/></linearGradient><linearGradient id="core" x2="0" y2="1"><stop offset="0" stop-color="#ff9a20"/><stop offset=".55" stop-color="#ffd43c"/><stop offset="1" stop-color="#fff9a8"/></linearGradient>
<g id="fireshape"><path d="M13 0C23 7 20 13 22 16C24 14 23 11 24 10C26 14 24 16 26 20C31 29 23 36 14 36C4 36-1 30 0 23C1 18 2 16 2 13C5 16 5 18 6 20C7 17 10 15 9 11C12 13 11 15 13 16C18 10 12 5 13 0ZM3 8Q7 10 4 14Q0 13 3 8Z" fill="url(#fire)"/><path d="M14 14C20 18 17 22 20 25C22 24 22 22 22 21C25 29 22 35 14 35C6 35 2 31 4 24C6 27 7 27 8 27C8 23 10 23 10 20C12 22 12 23 13 24C16 20 15 18 14 14Z" fill="url(#core)"/></g></defs><use href="#fireshape"/></svg><svg class="flame" viewBox="0 0 28 36"><use href="#fireshape"/></svg><svg class="flame" viewBox="0 0 28 36"><use href="#fireshape"/></svg></div><div class="meta"><time>14:10</time><svg class="ticks faint" viewBox="0 0 27 18" role="img" aria-label="Enviado"><path d="M1 11.500L5 16.500L18 1M10 14.500L12.500 16.500L26 1"/></svg></div></div><svg class="tail" viewBox="0 0 24 28" aria-hidden="true"><path d="M14 0Q13 22 24 26.500Q13 28 5 22L0 0Z"/></svg></article>
</main>
</div>
</body>
</html>
```
FILE: styles.css
```css
* {
  box-sizing: border-box;
}

body {
  margin: 0;
  background: #0a0a0a;
  color: #f4f5f4;
  font-family: Inter, "Liberation Sans", sans-serif;
}

.screen {
  display: grid;
  height: 100vh;
  overflow: hidden;
}

.wallpaper,
.chat {
  grid-area: 1 / 1;
}

.wallpaper {
  width: 100%;
  height: 100%;
  fill: none;
  stroke: #202020;
  stroke-width: 1.5;
  stroke-linejoin: round;
  stroke-linecap: round;
}

.chat {
  z-index: 1;
  display: flex;
  flex-direction: column;
  gap: 9px;
  padding: 8px 29px 0 30px;
}

.row {
  display: flex;
  align-items: flex-start;
  gap: 16px;
}

.bubble {
  position: relative;
  flex: none;
  padding: 8px 16px 12px;
  border-radius: 21px;
}

.in {
  align-self: flex-start;
  background: #242625;
}

.out {
  align-self: flex-end;
  background: #144d37;
}

.group {
  margin-top: 15px;
}

.media {
  flex: 0 1 584px;
  padding: 5px 5px 12px;
}

.media .body {
  padding: 9px 12px 0 11px;
}

.chart {
  display: block;
  width: 100%;
  height: auto;
  border-radius: 16px 16px 10px 10px;
}

.body {
  display: flex;
  justify-content: space-between;
  gap: 24px;
}

.wrap {
  display: grid;
}

.wrap > * {
  grid-area: 1 / 1;
}

.wrap .text {
  padding-right: 8px;
}

.media .text {
  padding-right: 0;
}

.text {
  margin: 0;
  font-size: 28px;
  line-height: 38px;
  white-space: nowrap;
}

.meta {
  display: flex;
  align-self: end;
  justify-self: end;
  align-items: center;
  gap: 6px;
  color: #999b9a;
  font-size: 22px;
  line-height: 20px;
}

.out .meta {
  color: #a0b8ad;
}

.ticks {
  width: 27px;
  height: 18px;
  fill: none;
  stroke: currentColor;
  stroke-width: 2;
  stroke-linecap: round;
}

.faint {
  opacity: 0.6;
}

.tail {
  position: absolute;
  bottom: 0;
  width: 24px;
  height: 28px;
}

.in .tail {
  left: -10px;
  fill: #242625;
}

.out .tail {
  right: -10px;
  fill: #144d37;
}

.share {
  display: grid;
  place-items: center;
  width: 56px;
  height: 56px;
  margin-top: 132px;
  padding: 0;
  border: 0;
  border-radius: 50%;
  background: #424345;
}

.flames {
  display: flex;
  align-items: center;
  gap: 12px;
  padding: 0 6px;
}

.flame {
  width: 28px;
  height: 36px;
}

.spaced {
  margin-right: 7px;
}
```
